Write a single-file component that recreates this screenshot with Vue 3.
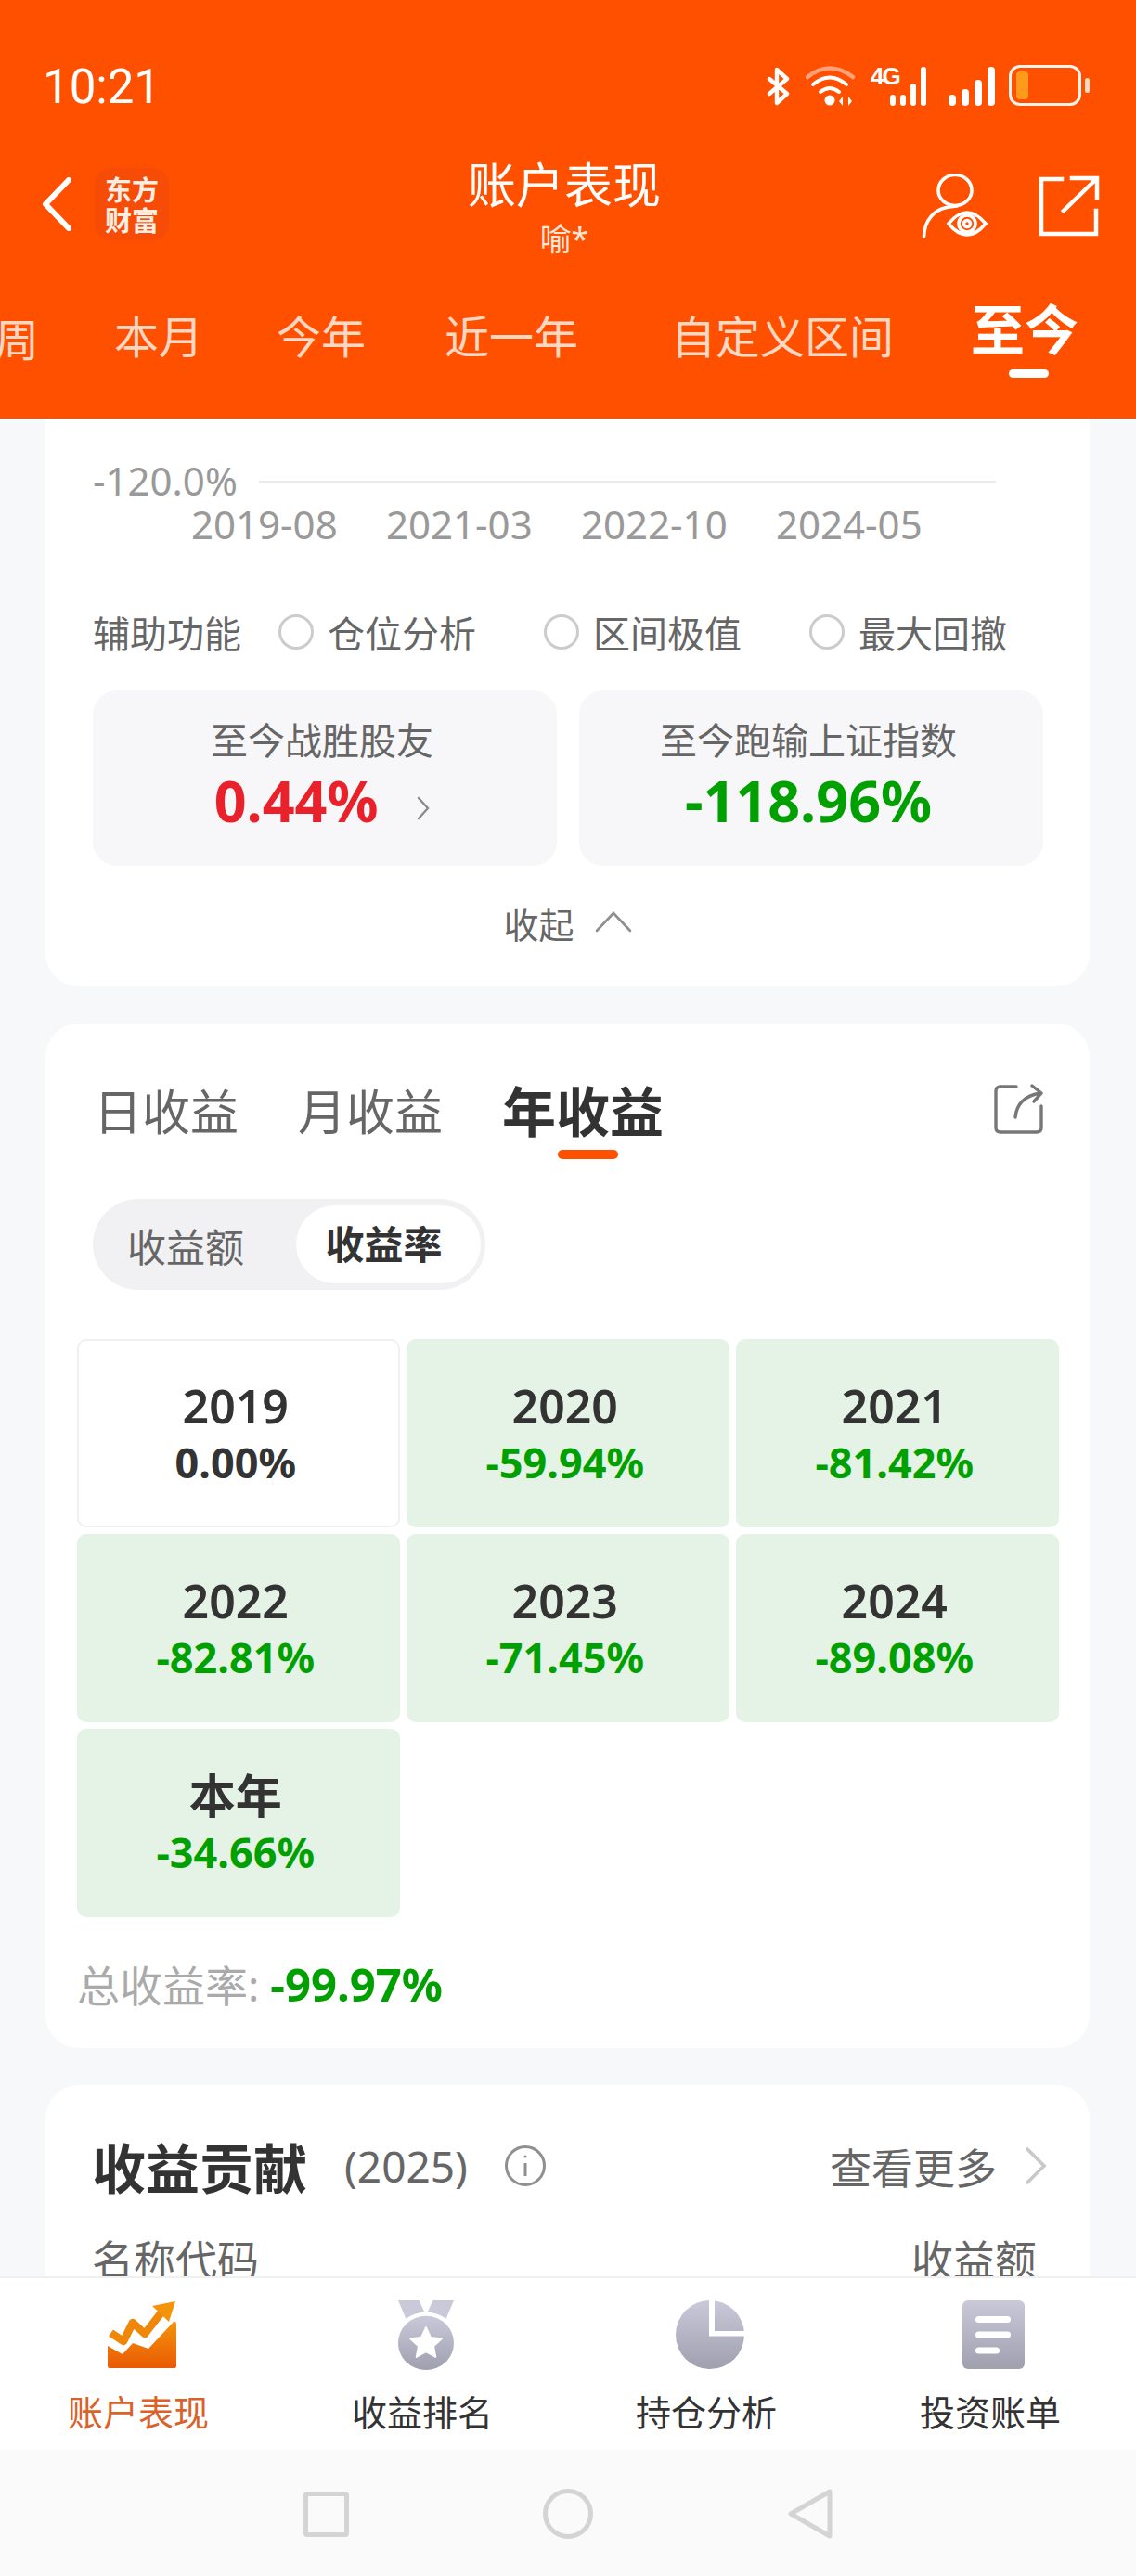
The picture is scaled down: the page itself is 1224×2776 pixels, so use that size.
<template>
  <div class="page">
    <header class="top">
      <div class="status">
        <span class="clock">10:21</span>
        <div class="status-icons">
          <svg class="ic-bt" width="26" height="42" viewBox="0 0 26 42" fill="none" stroke="#fff" stroke-width="4.4" stroke-linecap="round" stroke-linejoin="round">
            <path d="M3 13 L22 29 L11 39 V3 L22 13 L3 29" />
          </svg>
          <svg class="ic-wifi" width="54" height="44" viewBox="0 0 54 44" fill="none" stroke-linecap="round">
            <path d="M2 13 Q26 -6 51 13" stroke="#ffa27c" stroke-width="4.5" />
            <path d="M8 21 Q26 6 44 21" stroke="#fff" stroke-width="4" />
            <path d="M16 29 Q26 21 36 29" stroke="#fff" stroke-width="4" />
            <circle cx="26" cy="38" r="5.5" fill="#fff" />
            <path d="M40 34 L36 39 L40 44 Z M46 34 L50 39 L46 44 Z" fill="#fff" stroke="none" />
          </svg>
          <div class="net">
            <span class="net-label">4G</span>
            <div class="bars">
              <i v-for="(h, n) in [12, 12, 24, 42]" :key="n" class="bar" :style="{ height: h + 'px' }"></i>
            </div>
          </div>
          <div class="bars bars-second">
            <i v-for="(h, n) in [12, 18, 28, 42]" :key="n" class="bar bar-wide" :style="{ height: h + 'px' }"></i>
          </div>
          <div class="battery"><i class="battery-fill"></i></div>
          <i class="battery-nub"></i>
        </div>
      </div>

      <div class="nav-row">
        <div class="nav-left">
          <svg width="32" height="58" viewBox="0 0 32 58" fill="none" stroke="#fff" stroke-width="6" stroke-linecap="round" stroke-linejoin="round">
            <path d="M29 3 L4 29 L29 55" />
          </svg>
          <div class="logo"><span>东方</span><span>财富</span></div>
        </div>
        <div class="nav-title">
          <div class="title">账户表现</div>
          <div class="subtitle">喻*</div>
        </div>
        <div class="nav-right">
          <svg width="72" height="70" viewBox="0 0 72 70" fill="none" stroke="#fff" stroke-width="3.6" stroke-linecap="round">
            <ellipse cx="36" cy="18" rx="18" ry="16.5" />
            <path d="M2.5 68 C3 50 14 38 30 36 L38 35" />
            <path d="M29 54 Q49 30 69 54 Q49 78 29 54 Z" />
            <circle cx="49" cy="54" r="9" />
            <circle cx="49" cy="54" r="3.5" />
          </svg>
          <svg width="66" height="66" viewBox="0 0 66 66" fill="none" stroke="#fff" stroke-width="4.5" stroke-linecap="square">
            <path d="M25 4 H3 V63 H62 V38" />
            <path d="M27 38 L62 4 M36 3 H63 V24" />
          </svg>
        </div>
      </div>

      <div class="range-tabs">
        <span v-for="t in rangeTabs" :key="t.label" class="range-tab" :style="{ width: t.w + 'px', marginRight: t.gap + 'px' }">{{ t.label }}</span>
        <span class="range-tab active">至今</span>
      </div>
    </header>

    <main class="scroll">
      <section class="card card-chart">
        <div class="axis-row">
          <span class="axis-label">-120.0%</span>
          <i class="grid-line"></i>
        </div>
        <div class="dates">
          <span v-for="d in dates" :key="d">{{ d }}</span>
        </div>
        <div class="helpers">
          <span class="helper-title">辅助功能</span>
          <span v-for="h in helpers" :key="h" class="helper"><i class="radio"></i>{{ h }}</span>
        </div>
        <div class="stats">
          <div class="stat">
            <div class="stat-label">至今战胜股友</div>
            <div class="stat-value red">0.44%
              <svg class="stat-arrow" width="14" height="26" viewBox="0 0 14 26" fill="none" stroke="#8a8a8a" stroke-width="2.4" stroke-linecap="round">
                <path d="M2 2 L12 13 L2 24" />
              </svg>
            </div>
          </div>
          <div class="stat">
            <div class="stat-label">至今跑输上证指数</div>
            <div class="stat-value green">-118.96%</div>
          </div>
        </div>
        <div class="collapse">
          收起
          <svg width="40" height="24" viewBox="0 0 40 24" fill="none" stroke="#8f8f8f" stroke-width="2.6" stroke-linecap="round">
            <path d="M2 22 L20 3 L38 22" />
          </svg>
        </div>
      </section>

      <section class="card card-income">
        <div class="income-head">
          <span class="income-tab">日收益</span>
          <span class="income-tab">月收益</span>
          <span class="income-tab active">年收益</span>
          <svg class="income-share" width="54" height="54" viewBox="0 0 54 54" fill="none" stroke="#777" stroke-width="3.4" stroke-linecap="round" stroke-linejoin="round">
            <path d="M24 3 H7 Q2 3 2 8 V47 Q2 52 7 52 H46 Q51 52 51 47 V24" />
            <path d="M23 36 Q25 14 50 10 M41 2 L51 10 L43 19" />
          </svg>
        </div>
        <div class="switch">
          <span class="switch-item">收益额</span>
          <span class="switch-item on">收益率</span>
        </div>
        <div class="years">
          <div v-for="y in years" :key="y.name" class="year" :class="{ loss: y.value !== '0.00%' }">
            <div class="year-name">{{ y.name }}</div>
            <div class="year-value">{{ y.value }}</div>
          </div>
        </div>
        <div class="total"><span>总收益率:</span> <b>-99.97%</b></div>
      </section>

      <section class="card card-contrib">
        <div class="contrib-head">
          <span class="contrib-title">收益贡献</span>
          <span class="contrib-year">(2025)</span>
          <svg width="46" height="46" viewBox="0 0 46 46" fill="none" stroke="#8f8f8f" stroke-width="3">
            <circle cx="23" cy="23" r="20.5" />
            <path d="M23 20 V34" />
            <circle cx="23" cy="13" r="1.6" fill="#8f8f8f" stroke="none" />
          </svg>
          <span class="more">查看更多</span>
          <svg width="24" height="42" viewBox="0 0 24 42" fill="none" stroke="#c8c8c8" stroke-width="3.6" stroke-linecap="round">
            <path d="M3 3 L21 21 L3 39" />
          </svg>
        </div>
        <div class="contrib-cols">
          <span>名称代码</span>
          <span>收益额</span>
        </div>
      </section>
    </main>

    <footer class="tabbar">
      <div class="tab on">
        <svg width="74" height="72" viewBox="0 0 74 72">
          <defs>
            <linearGradient id="chartFill" x1="0" y1="0" x2="0" y2="1">
              <stop offset="0" stop-color="#f5930a" />
              <stop offset="1" stop-color="#e95a04" />
            </linearGradient>
          </defs>
          <path d="M0 48 L16 57 L27 45 L44 51 L71 22 Q74 21 74 25 V70 Q74 72 72 72 H2 Q0 72 0 70 Z" fill="url(#chartFill)" />
          <path d="M3.5 34 L17 43 L27 23 L40 35 L61 8" fill="none" stroke="#f18708" stroke-width="8.5" stroke-linejoin="round" />
          <path d="M48 5 L73 0 L66 22 Z" fill="#f5930a" />
        </svg>
        <span>账户表现</span>
      </div>
      <div class="tab">
        <svg width="66" height="81" viewBox="0 0 66 81">
          <defs>
            <linearGradient id="greyFill" x1="0" y1="0" x2="0" y2="1">
              <stop offset="0" stop-color="#c9c9da" />
              <stop offset="1" stop-color="#9f9fae" />
            </linearGradient>
          </defs>
          <path d="M1 1 H25 L31 14 Q18 16 10 22 Z M65 1 H41 L35 14 Q48 16 56 22 Z" fill="#c9c9da" />
          <ellipse cx="33" cy="50" rx="32" ry="31" fill="url(#greyFill)" />
          <path d="M33 32 L38.4 43.5 L51 45 L41.6 53.6 L44 66 L33 59.8 L22 66 L24.4 53.6 L15 45 L27.6 43.5 Z" fill="#fff" stroke="#fff" stroke-width="2" stroke-linejoin="round" />
        </svg>
        <span>收益排名</span>
      </div>
      <div class="tab">
        <svg width="74" height="74" viewBox="0 0 74 74">
          <defs>
            <linearGradient id="pieFill" x1="0" y1="0" x2="0" y2="1">
              <stop offset="0" stop-color="#c9c9da" />
              <stop offset="1" stop-color="#9f9fae" />
            </linearGradient>
          </defs>
          <circle cx="37" cy="37" r="37" fill="url(#pieFill)" />
          <path d="M36 0 H42 V33 H74 V38.5 H36 Z" fill="#fff" />
        </svg>
        <span>持仓分析</span>
      </div>
      <div class="tab">
        <svg width="68" height="74" viewBox="0 0 68 74">
          <defs>
            <linearGradient id="docFill" x1="0" y1="0" x2="0" y2="1">
              <stop offset="0" stop-color="#c9c9da" />
              <stop offset="1" stop-color="#9f9fae" />
            </linearGradient>
          </defs>
          <rect width="67" height="74" rx="6" fill="url(#docFill)" />
          <rect x="14" y="17" width="38" height="7" rx="3.5" fill="#fff" />
          <rect x="14" y="33.5" width="38" height="7" rx="3.5" fill="#fff" />
          <rect x="14" y="50.5" width="26" height="7" rx="3.5" fill="#fff" />
        </svg>
        <span>投资账单</span>
      </div>
    </footer>

    <div class="sysnav">
      <i class="sys-square"></i>
      <i class="sys-circle"></i>
      <svg width="50" height="56" viewBox="0 0 50 56" fill="none" stroke="#d4d4d4" stroke-width="5" stroke-linejoin="round">
        <path d="M46 4 V52 L4 28 Z" />
      </svg>
    </div>
  </div>
</template>

<script setup>
const rangeTabs = [
  { label: '本月', w: 92, gap: 83 },
  { label: '今年', w: 97, gap: 84 },
  { label: '近一年', w: 144, gap: 100 },
  { label: '自定义区间', w: 240, gap: 83 }
]

const dates = ['2019-08', '2021-03', '2022-10', '2024-05']
const helpers = ['仓位分析', '区间极值', '最大回撤']

const years = [
  { name: '2019', value: '0.00%' },
  { name: '2020', value: '-59.94%' },
  { name: '2021', value: '-81.42%' },
  { name: '2022', value: '-82.81%' },
  { name: '2023', value: '-71.45%' },
  { name: '2024', value: '-89.08%' },
  { name: '本年', value: '-34.66%' }
]
</script>

<style>
html, body {
  margin: 0;
  background: #f7f8fa;
}
</style>

<style scoped>
.page {
  width: 1224px;
  height: 2776px;
  display: flex;
  flex-direction: column;
  overflow: hidden;
  background: #f7f8fa;
  font-family: "Noto Sans", "Noto Sans CJK SC", sans-serif;
  color: #333;
}

.top {
  height: 451px;
  flex: none;
  background: #ff5000;
  color: #fff;
  display: flex;
  flex-direction: column;
}

.status {
  height: 72px;
  margin-top: 70px;
  padding: 0 50px 0 46px;
  display: flex;
  justify-content: space-between;
  align-items: flex-start;
}

.clock {
  font-family: Roboto, sans-serif;
  font-size: 51px;
  line-height: 48px;
}

.status-icons {
  display: flex;
  align-items: flex-end;
  height: 44px;
}

.ic-bt { margin-right: 16px; }
.ic-wifi { margin-right: 16px; }

.net {
  position: relative;
  width: 60px;
  height: 44px;
  margin-right: 24px;
}

.net-label {
  position: absolute;
  left: 0;
  top: 0;
  font-family: "Liberation Sans", sans-serif;
  font-weight: 700;
  font-size: 26px;
  line-height: 24px;
  letter-spacing: -2px;
}

.net .bars {
  position: absolute;
  right: 0;
  bottom: 0;
}

.bars {
  display: flex;
  align-items: flex-end;
  gap: 5px;
}

.bar {
  width: 6px;
  border-radius: 3px;
  background: #fff;
}

.bar-wide {
  width: 8px;
  border-radius: 4px;
}

.bars-second {
  gap: 6px;
  margin-right: 15px;
}

.battery {
  width: 78px;
  height: 44px;
  box-sizing: border-box;
  border: 3px solid #fff4ec;
  border-radius: 12px;
  padding: 4px 5px;
}

.battery-fill {
  display: block;
  width: 13px;
  height: 100%;
  border-radius: 4px;
  background: #ff9a1a;
}

.battery-nub {
  width: 5px;
  height: 16px;
  margin: 0 0 14px 4px;
  border-radius: 3px;
  background: #ffd9c2;
}

.nav-row {
  height: 90px;
  margin-top: 22px;
  padding: 0 39px 0 45px;
  display: grid;
  grid-template-columns: 1fr auto 1fr;
  align-items: center;
}

.nav-left {
  display: flex;
  align-items: center;
  gap: 25px;
}

.logo {
  width: 80px;
  height: 78px;
  border-radius: 18px;
  background: #f64c08;
  display: flex;
  flex-direction: column;
  align-items: center;
  justify-content: center;
  font-family: "Noto Sans CJK SC", sans-serif;
  font-weight: 700;
  font-size: 29px;
  line-height: 33px;
  color: #ffeee4;
}

.nav-title {
  text-align: center;
  position: relative;
  top: 5px;
  left: -7px;
}

.title {
  font-size: 52px;
  line-height: 60px;
}

.subtitle {
  margin-top: 4px;
  font-size: 34px;
  line-height: 48px;
  color: #ffe6d9;
}

.nav-right {
  display: flex;
  justify-content: flex-end;
  align-items: center;
  gap: 54px;
  position: relative;
  top: 2px;
}

.range-tabs {
  margin-top: 79px;
  margin-left: -6px;
  display: flex;
  align-items: center;
  height: 60px;
  position: relative;
}

.range-tabs::before {
  content: "周";
  font-size: 48px;
  width: 46px;
  color: #ffd8c4;
  margin-right: 83px;
}

.range-tab {
  flex: none;
  font-size: 48px;
  line-height: 60px;
  color: #ffd8c4;
  white-space: nowrap;
}

.range-tab.active {
  position: relative;
  top: -8px;
  font-size: 58px;
  font-weight: 700;
  color: #fff;
}

.range-tab.active::after {
  content: "";
  position: absolute;
  left: 41px;
  top: 73px;
  width: 43px;
  height: 9px;
  border-radius: 5px;
  background: #fff;
}

.scroll {
  flex: 1;
  min-height: 0;
  overflow: hidden;
  padding: 0 50px 0 49px;
  display: flex;
  flex-direction: column;
  gap: 40px;
}

.card {
  flex: none;
  background: #fff;
  border-radius: 36px;
  box-sizing: border-box;
}

.card-chart {
  height: 612px;
  border-radius: 0 0 36px 36px;
  padding: 40px 0 0 51px;
}

.axis-row {
  display: flex;
  align-items: center;
  height: 52px;
}

.axis-label {
  width: 179px;
  font-size: 42px;
  color: #999;
  white-space: nowrap;
}

.grid-line {
  width: 794px;
  height: 2px;
  margin-top: 4px;
  background: #e9e9f0;
}

.dates {
  margin-top: -3px;
  margin-left: 106px;
  display: flex;
  gap: 53px;
  height: 50px;
  font-size: 42px;
  line-height: 50px;
  color: #999;
}

.dates span {
  width: 157px;
  white-space: nowrap;
}

.helpers {
  margin-top: 63px;
  display: flex;
  align-items: center;
  height: 56px;
  font-size: 40px;
  color: #666;
}

.helper-title {
  width: 200px;
}

.helper {
  display: flex;
  align-items: center;
  width: 286px;
  white-space: nowrap;
}

.helper:first-of-type {
  width: 285px;
}

.radio {
  width: 38px;
  height: 38px;
  box-sizing: border-box;
  margin-right: 15px;
  border: 3px solid #ccc;
  border-radius: 50%;
}

.stats {
  margin-top: 35px;
  display: flex;
  gap: 24px;
}

.stat {
  width: 500px;
  height: 189px;
  box-sizing: border-box;
  padding: 27px 6px 0 0;
  border-radius: 26px;
  background: #f7f7f9;
  text-align: center;
}

.stat-label {
  font-size: 40px;
  line-height: 54px;
  color: #666;
}

.stat-value {
  margin-top: 1px;
  font-size: 61px;
  line-height: 74px;
  font-weight: 700;
}

.stat-arrow {
  margin-left: 26px;
  vertical-align: 2px;
}

.red { color: #e8212a; }
.green { color: #00a000; }

.collapse {
  margin-top: 36px;
  margin-left: -51px;
  display: flex;
  justify-content: center;
  align-items: center;
  gap: 22px;
  font-size: 38px;
  line-height: 54px;
  color: #666;
}

.collapse svg {
  margin-top: -6px;
}

.card-income {
  height: 1104px;
  padding: 0 34px;
}

.income-head {
  display: flex;
  align-items: center;
  height: 104px;
  margin-top: 40px;
  padding-left: 18px;
  position: relative;
}

.income-tab {
  font-size: 52px;
  color: #666;
  margin-right: 64px;
  position: relative;
  white-space: nowrap;
}

.income-tab.active {
  font-size: 58px;
  font-weight: 700;
  color: #333;
}

.income-tab.active::after {
  content: "";
  position: absolute;
  left: 60px;
  bottom: -12px;
  width: 65px;
  height: 10px;
  border-radius: 5px;
  background: #ff5000;
}

.income-share {
  position: absolute;
  right: 15px;
  top: 25px;
}

.switch {
  margin: 45px 0 0 17px;
  width: 423px;
  height: 98px;
  box-sizing: border-box;
  padding: 7px 5px 7px 0;
  border-radius: 49px;
  background: #f1f1f3;
  display: flex;
  align-items: center;
  justify-content: space-between;
}

.switch-item {
  font-size: 42px;
  color: #666;
  padding-left: 37px;
}

.switch-item.on {
  width: 199px;
  height: 84px;
  box-sizing: border-box;
  padding: 0 10px 0 0;
  border-radius: 42px;
  background: #fff;
  color: #333;
  font-weight: 700;
  line-height: 84px;
  text-align: center;
}

.years {
  margin-top: 53px;
  display: grid;
  grid-template-columns: repeat(3, 347.5px);
  grid-auto-rows: 202.5px;
  gap: 7.5px;
}

.year {
  box-sizing: border-box;
  padding-top: 41px;
  border: 2px solid #f0f0f0;
  border-radius: 10px;
  text-align: center;
}

.year.loss {
  border: none;
  padding-top: 43px;
  background: #e4f3e6;
  color: #00a000;
}

.year-name {
  font-size: 50px;
  line-height: 58px;
  font-weight: 600;
  color: #333;
  padding-right: 6px;
}

.year-value {
  margin-top: 2px;
  font-size: 45px;
  line-height: 60px;
  font-weight: 700;
  padding-right: 6px;
}

.total {
  margin: 41px 0 0 0;
  font-size: 46px;
  line-height: 62px;
  color: #aaa;
  white-space: nowrap;
}

.total b {
  font-size: 49px;
  color: #00a000;
  font-weight: 700;
}

.card-contrib {
  height: 300px;
  padding: 0 46px 0 50px;
}

.contrib-head {
  display: flex;
  align-items: center;
  height: 70px;
  margin-top: 52px;
}

.contrib-title {
  font-size: 58px;
  font-weight: 700;
  margin-right: 40px;
}

.contrib-year {
  font-size: 46px;
  color: #666;
  margin-right: 39px;
}

.more {
  margin-left: auto;
  margin-right: 30px;
  font-size: 45px;
  color: #666;
}

.contrib-cols {
  margin-top: 37px;
  padding-right: 11px;
  display: flex;
  justify-content: space-between;
  font-size: 45px;
  line-height: 60px;
  color: #666;
}

.tabbar {
  height: 187px;
  flex: none;
  box-sizing: border-box;
  border-top: 2px solid #f0f0f2;
  background: #fff;
  display: grid;
  grid-template-columns: repeat(4, 1fr);
}

.tab {
  position: relative;
  display: flex;
  flex-direction: column;
  align-items: center;
  padding-top: 23px;
  font-size: 38px;
  color: #333;
}

.tab svg {
  height: 76px;
  overflow: visible;
}

.tab span {
  position: absolute;
  top: 119px;
  line-height: 50px;
  white-space: nowrap;
  transform: translateX(-4px);
}

.tab.on {
  color: #d9622a;
}

.sysnav {
  height: 134px;
  flex: none;
  background: #fafafa;
  display: flex;
  align-items: center;
  justify-content: center;
  gap: 209px;
  padding-top: 2px;
}

.sys-square {
  width: 49px;
  height: 49px;
  box-sizing: border-box;
  border: 5px solid #d4d4d4;
  border-radius: 4px;
}

.sys-circle {
  width: 54px;
  height: 54px;
  box-sizing: border-box;
  border: 5px solid #d4d4d4;
  border-radius: 50%;
}
</style>
